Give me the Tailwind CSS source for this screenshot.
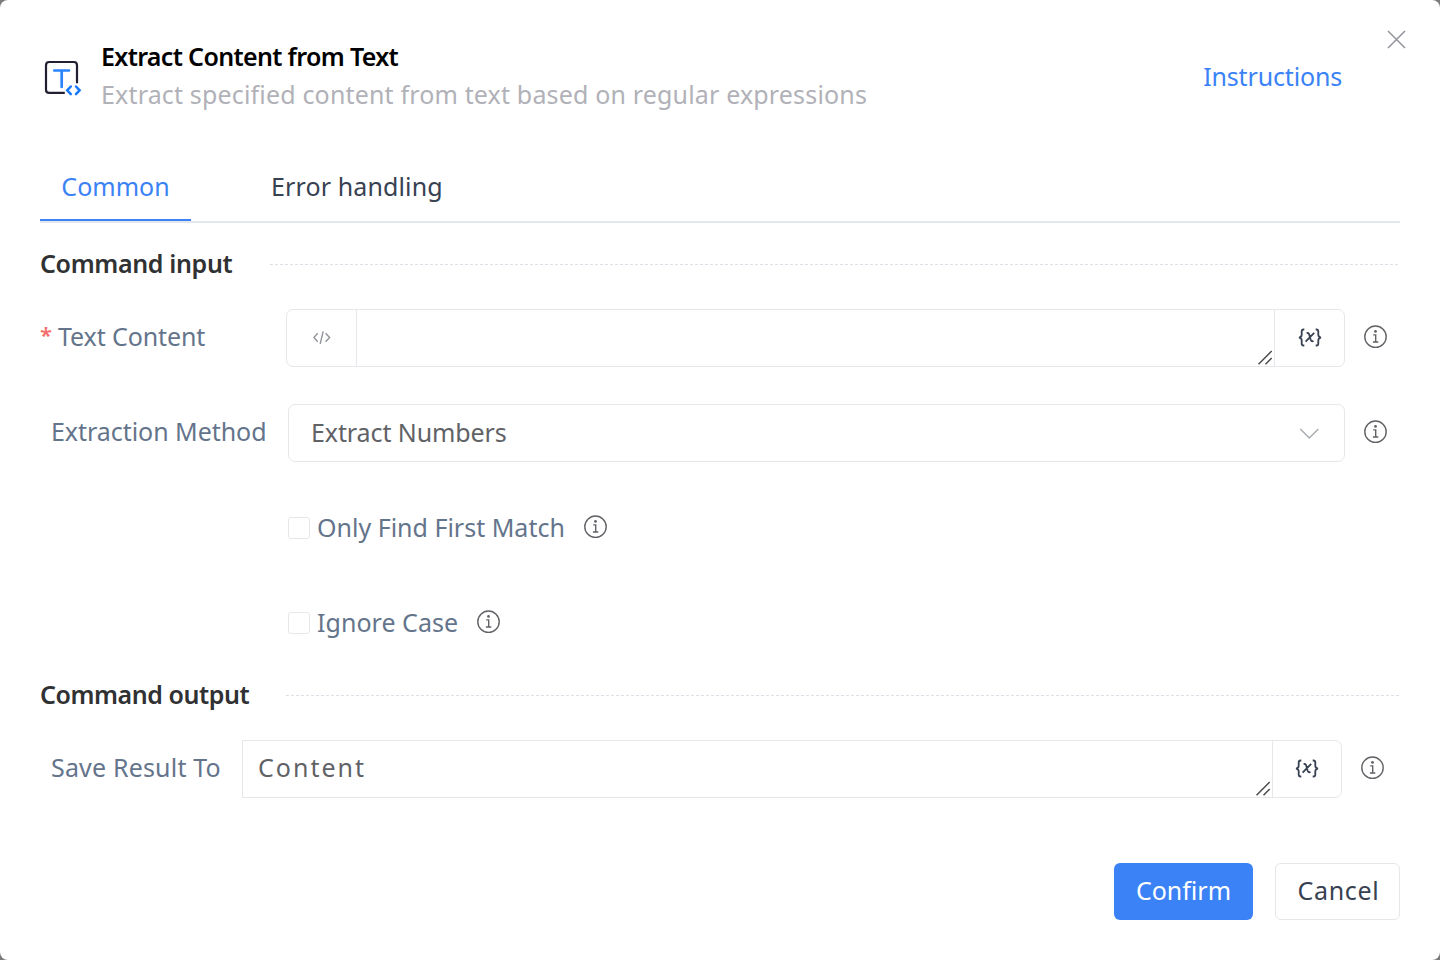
<!DOCTYPE html>
<html lang="en">
<head>
<meta charset="utf-8">
<title>Extract Content from Text</title>
<script src="https://cdn.jsdelivr.net/npm/@tailwindcss/browser@4"></script>
</head>
<body class="bg-[#7a7a7a] font-['Noto_Sans',sans-serif] text-[25px] leading-[36px] whitespace-nowrap">
<svg class="hidden">
  <symbol id="info" viewBox="0 0 24 24"><g fill="none" stroke="#606266"><circle cx="12.5" cy="11.7" r="10.7" stroke-width="1.4"/><path d="M10.2 9.9h2.5v7M9.9 17h5.4" stroke-width="1.4"/></g><circle cx="12.5" cy="6.4" r="1.4" fill="#606266"/></symbol>
  <symbol id="grip" viewBox="0 0 16 16"><path d="M.5 14.2 13.7 1M7.5 14.2l6.2-6.2" fill="none" stroke="#4b4b4b" stroke-width="1.5"/></symbol>
  <symbol id="var" viewBox="0 0 24 20"><g fill="none" stroke="#374151" stroke-width="1.8"><path d="M6.3 1.5H5.6Q3.7 1.5 3.7 3.6V6.8Q3.7 9.2 1 9.6Q3.7 10 3.7 12.4V15.4Q3.7 17.5 5.6 17.5H6.3"/><path d="M17.7 1.5H18.4Q20.3 1.5 20.3 3.6V6.8Q20.3 9.2 23 9.6Q20.3 10 20.3 12.4V15.4Q20.3 17.5 18.4 17.5H17.7"/><path d="M8.6 5.3Q10.5 4.3 11.2 6.6L12.7 11.8Q13.4 14 15.5 12.9M16.2 4.9 7.6 13.7"/></g></symbol>
</svg>
<main class="h-[960px] w-full rounded-[8px] bg-white px-10 flex flex-col relative">
  <svg class="absolute left-[1387px] top-[30px] size-[19px]" viewBox="0 0 19 19"><path d="M1 1l17 17M18 1L1 18" stroke="#909399" stroke-width="1.5"/></svg>

  <header class="h-[154px] shrink-0 pt-[38px] flex items-start">
    <svg class="mt-[21px] ml-[4px] w-[38px] h-[38px] shrink-0" viewBox="0 0 38 38" fill="none"><path d="M20.8 33.9H5.2Q2 33.9 2 30.7V6.2Q2 3 5.2 3H29.8Q33 3 33 6.2V24.3" stroke="#231f32" stroke-width="2.2"/><path d="M10.3 11.5H25M17.7 11.5V28" stroke="#2b83fe" stroke-width="2.7" stroke-linecap="round"/><path d="M26.8 27.5 23.2 31.3 26.8 35.1M32 27.5 35.6 31.3 32 35.1" stroke="#1677ff" stroke-width="2.5" stroke-linecap="round"/></svg>
    <div class="ml-[19px] grow leading-[38px] -mt-px">
      <h1 class="font-semibold text-black tracking-[-0.65px]">Extract Content from Text</h1>
      <p class="text-[#b1b1b8] tracking-[0.165px]">Extract specified content from text based on regular expressions</p>
    </div>
    <a class="mt-[20px] mr-[58px] text-[#3b82f6] tracking-[-0.159px]">Instructions</a>
  </header>

  <nav class="h-[69px] shrink-0 border-b-2 border-[#e4e7ed] flex">
    <div class="w-[151px] h-[67px] pt-[14px] text-center border-b-2 border-[#3b82f6] text-[#3b82f6]">Common</div>
    <div class="pt-[14px] pl-[80px] text-[#374151] tracking-[0.12px]">Error handling</div>
  </nav>

  <div class="mt-[22px] h-[36px] shrink-0 flex items-center">
    <h2 class="w-[230px] font-semibold text-[#303133] tracking-[-0.352px]">Command input</h2>
    <svg class="h-px grow mt-[3px]"><path d="M0 .5H1130" stroke="#dcdfe6" stroke-dasharray="3 2"/></svg>
  </div>

  <div class="mt-[28px] h-[58px] shrink-0 flex">
    <div class="w-[246px] pt-[9px] text-[#64748b] flex"><span class="w-[18px] -mt-[2px] text-[22px] font-semibold text-[#f56c6c]">*</span><span class="tracking-[-0.1px]">Text Content</span></div>
    <div class="w-[1059px] border border-[#e5e7eb] rounded-[7px] flex">
      <div class="w-[70px] border-r border-[#e5e7eb] flex items-center justify-center"><svg class="w-[18px] h-[14px]" viewBox="0 0 18 14" fill="none" stroke="#909399" stroke-width="1.4"><path d="M4.7 2.3.9 6.5 4.7 10.7M12.6 2.3 16.6 6.5 12.6 10.7M10.2.3 7.2 12.9"/></svg></div>
      <div class="w-[918px] border-r border-[#e5e7eb] flex items-end justify-end"><svg class="size-[16px]"><use href="#grip"/></svg></div>
      <div class="grow flex items-center justify-center"><svg class="w-[24px] h-[20px]"><use href="#var"/></svg></div>
    </div>
    <svg class="mt-[16px] ml-[18px] size-[24px]"><use href="#info"/></svg>
  </div>

  <div class="mt-[37px] h-[58px] shrink-0 flex">
    <div class="w-[248px] pt-[9px] pl-[11px] text-[#64748b] tracking-[-0.05px]">Extraction Method</div>
    <div class="w-[1057px] border border-[#e5e7eb] rounded-[7px] pl-[22px] pr-[25px] flex items-center justify-between text-[#606266]"><span class="-mt-[2px] tracking-[-0.1px]">Extract Numbers</span><svg class="w-[20px] h-[12px] mt-[2px]" viewBox="0 0 20 12"><path d="M1.3 1 10.3 9.9 19.3 1" fill="none" stroke="#a8abb2" stroke-width="1.4"/></svg></div>
    <svg class="mt-[16px] ml-[18px] size-[24px]"><use href="#info"/></svg>
  </div>

  <div class="mt-[37px] h-[58px] shrink-0 flex items-center pl-[248px] text-[#64748b]">
    <span class="size-[22px] rounded-[3px] border border-[#e5e7eb]"></span><span class="ml-[7px] w-[266px] -mt-[2px]">Only Find First Match</span><svg class="size-[24px] -mt-[2px]"><use href="#info"/></svg>
  </div>
  <div class="mt-[37px] h-[58px] shrink-0 flex items-center pl-[248px] text-[#64748b]">
    <span class="size-[22px] rounded-[3px] border border-[#e5e7eb]"></span><span class="ml-[7px] w-[159px] -mt-[2px] tracking-[0.035px]">Ignore Case</span><svg class="size-[24px] -mt-[2px]"><use href="#info"/></svg>
  </div>

  <div class="mt-[24px] h-[36px] shrink-0 flex items-center">
    <h2 class="w-[246px] font-semibold text-[#303133] tracking-[-0.44px]">Command output</h2>
    <svg class="h-px grow mt-[2px]"><path d="M0 .5H1114" stroke="#dcdfe6" stroke-dasharray="3 2"/></svg>
  </div>

  <div class="mt-[28px] h-[58px] shrink-0 flex">
    <div class="w-[202px] pt-[9px] pl-[11px] text-[#64748b] tracking-[0.18px]">Save Result To</div>
    <div class="w-[1100px] border border-[#e5e7eb] rounded-r-[7px] flex">
      <div class="w-[1030px] border-r border-[#e5e7eb] pl-[15px] flex items-end justify-between"><span class="self-start pt-[8px] text-[#606266] tracking-[2.008px]">Content</span><svg class="size-[16px]"><use href="#grip"/></svg></div>
      <div class="grow flex items-center justify-center"><svg class="w-[24px] h-[20px]"><use href="#var"/></svg></div>
    </div>
    <svg class="mt-[16px] ml-[18px] size-[24px]"><use href="#info"/></svg>
  </div>

  <footer class="mt-[65px] h-[57px] shrink-0 flex justify-end gap-[22px]">
    <button class="w-[139px] rounded-[6px] bg-[#3b82f6] text-white pb-[3px]">Confirm</button>
    <button class="w-[125px] rounded-[6px] border border-[#e5e7eb] text-[#374151] tracking-[0.7px] pb-[3px] pl-[2px]">Cancel</button>
  </footer>
</main>
</body>
</html>
